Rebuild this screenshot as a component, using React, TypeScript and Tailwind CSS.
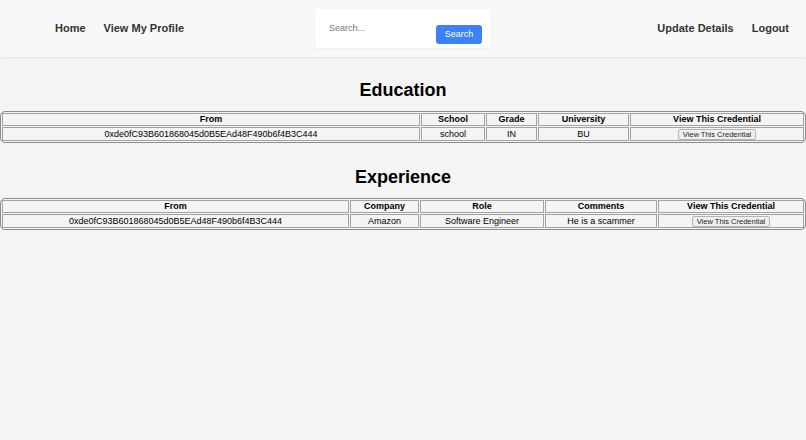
const font = { fontFamily: '"Liberation Sans", Arial, sans-serif' };

const education = {
  cols: [
    { label: "From", w: "w-[418px]" },
    { label: "School", w: "w-[64px]" },
    { label: "Grade", w: "w-[51px]" },
    { label: "University", w: "w-[91px]" },
    { label: "View This Credential", w: "" },
  ],
  row: ["0xde0fC93B601868045d0B5EAd48F490b6f4B3C444", "school", "IN", "BU"],
};

const experience = {
  cols: [
    { label: "From", w: "w-[347px]" },
    { label: "Company", w: "w-[69px]" },
    { label: "Role", w: "w-[124px]" },
    { label: "Comments", w: "w-[112px]" },
    { label: "View This Credential", w: "" },
  ],
  row: ["0xde0fC93B601868045d0B5EAd48F490b6f4B3C444", "Amazon", "Software Engineer", "He is a scammer"],
};

function CredentialTable({ cols, row }: { cols: { label: string; w: string }[]; row: string[] }) {
  return (
    <table className="mt-[10px] w-full table-fixed border-separate border-spacing-[1px] rounded-[5px] border border-[#8c8c8c] text-[9px] text-black">
      <thead>
        <tr>
          {cols.map((c) => (
            <th
              key={c.label}
              className={`${c.w} h-[13px] border border-[#a3a3a3] p-0 text-center font-bold leading-[11px]`}
            >
              {c.label}
            </th>
          ))}
        </tr>
      </thead>
      <tbody>
        <tr>
          {row.map((v, i) => (
            <td key={i} className="h-[14px] border border-[#a3a3a3] p-0 text-center leading-[12px]">
              {v}
            </td>
          ))}
          <td className="h-[14px] border border-[#a3a3a3] p-0 text-center leading-[12px]">
            <button className="inline-flex h-[11px] items-center rounded-[2px] border border-[#b5b5b5] bg-[#efefef] px-[4px] align-middle text-[7.5px] leading-none text-[#222]">
              View This Credential
            </button>
          </td>
        </tr>
      </tbody>
    </table>
  );
}

export default function App() {
  return (
    <main className="min-h-screen bg-[#f4f4f4]" style={font}>
      <header className="grid h-[57px] grid-cols-[1fr_auto_1fr] items-center bg-[#f8f8f8] shadow-[0_1px_3px_rgba(0,0,0,0.08)]">
        <nav className="flex items-center gap-[18px] pl-[55px] text-[11px] font-bold text-[#333]">
          <a href="#">Home</a>
          <a href="#">View My Profile</a>
        </nav>
        <form className="flex h-[39px] w-[176px] items-start rounded-[4px] bg-white pl-[7px] pr-[9px] pt-[6px] shadow-[0_1px_3px_rgba(0,0,0,0.06)]">
          <input
            placeholder="Search..."
            className="h-[26px] w-[107px] px-[7px] text-[9px] text-[#333] outline-none placeholder:text-[#757575]"
          />
          <button
            type="button"
            className="ml-[7px] mt-[10px] h-[19px] w-[46px] rounded-[3px] bg-[#3b82f6] text-[9px] text-white"
          >
            Search
          </button>
        </form>
        <nav className="flex items-center justify-end gap-[18px] pr-[17px] text-[11px] font-bold text-[#333]">
          <a href="#">Update Details</a>
          <a href="#">Logout</a>
        </nav>
      </header>

      <section>
        <h2 className="mt-[22px] text-center text-[18px] font-bold leading-[22px] text-black">Education</h2>
        <CredentialTable {...education} />
      </section>

      <section>
        <h2 className="mt-[23px] text-center text-[18px] font-bold leading-[22px] text-black">Experience</h2>
        <CredentialTable {...experience} />
      </section>
    </main>
  );
}
